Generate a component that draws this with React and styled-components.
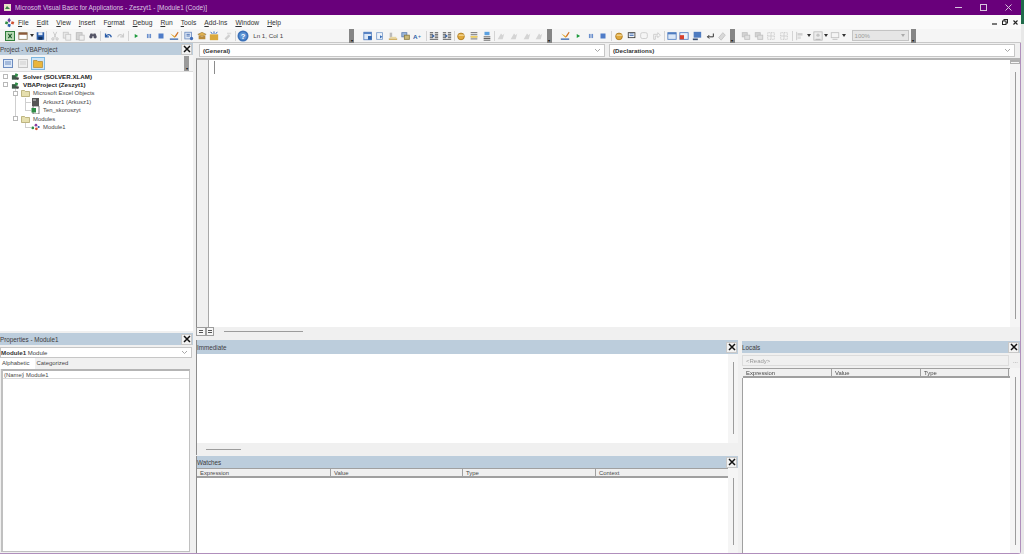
import React from 'react';
import styled, { createGlobalStyle } from 'styled-components';

const GlobalStyle = createGlobalStyle`
  html, body, #root { margin: 0; padding: 0; width: 100%; height: 100%; overflow: hidden; }
  body { font-family: "Liberation Sans", Arial, sans-serif; font-size: 6px; color: #333; background: #e8e8e8; }
  * { box-sizing: border-box; }
`;

const Screen = styled.div`
  width: 1024px;
  height: 554px;
  display: flex;
  overflow: hidden;
  filter: blur(0.3px);
`;

const Frame = styled.div`
  width: 1021px;
  flex: none;
  display: flex;
  flex-direction: column;
  background: #f0f0f0;
`;

const DesktopEdge = styled.div`
  flex: 1;
  background: linear-gradient(#1f6b4a 0 24px, #e8e8e8 24px);
`;

const TitleBar = styled.div`
  height: 15px;
  flex: none;
  display: flex;
  align-items: center;
  background: #69007b;
  color: #dcc8e2;
  font-size: 6.45px;
  padding-left: 3px;
  gap: 3px;
`;

const TitleText = styled.span`
  flex: 1;
`;

const WinControls = styled.div`
  display: flex;
`;

const WinButton = styled.div`
  width: 25px;
  height: 15px;
  display: flex;
  align-items: center;
  justify-content: center;
`;

const MenuBar = styled.div`
  height: 14px;
  flex: none;
  display: flex;
  align-items: center;
  background: #fafafa;
  padding-left: 4px;
`;

const MenuLogo = styled.div`
  width: 14px;
  height: 12px;
`;

const MenuItem = styled.span`
  font-size: 6.7px;
  color: #333;
  margin-right: ${({ $gap }) => $gap}px;
`;

const DocControls = styled.div`
  margin-left: auto;
  display: flex;
  gap: 5px;
  padding-right: 3px;
  align-items: center;
`;

const Toolbar = styled.div`
  height: 14px;
  flex: none;
  display: flex;
  align-items: center;
  background: #f5f5f5;
  padding-left: 4px;
  border-bottom: 1px solid #c8c8c8;
`;

const Slot = styled.div`
  width: ${({ $w }) => $w || 12.7}px;
  height: 12px;
  flex: none;
  display: flex;
  align-items: center;
  justify-content: center;
`;

const Sep = styled.div`
  width: 1px;
  height: 10px;
  flex: none;
  background: #d4d4d4;
  margin: 0 ${({ $m }) => $m ?? 1}px;
`;

const Gripper = styled.div`
  width: 5px;
  height: 14px;
  flex: none;
  background: #858585;
  margin: 0 ${({ $r }) => $r ?? 5}px 0 1px;
  display: flex;
  align-items: flex-end;
  justify-content: center;
  color: #111;
  font-size: 4px;
  line-height: 5px;
`;

const Position = styled.span`
  width: 99px;
  flex: none;
  font-size: 6.2px;
  color: #444;
  padding-left: 4px;
`;

const ZoomBox = styled.div`
  width: 57px;
  height: 11px;
  flex: none;
  margin: 0 1px 0 5px;
  display: flex;
  align-items: center;
  justify-content: space-between;
  padding: 0 3px 0 2px;
  border: 1px solid #c4c4c4;
  background: #e6e6e6;
  color: #9a9a9a;
  font-size: 6px;
`;

const Workspace = styled.div`
  flex: 1;
  min-height: 0;
  display: flex;
  border-right: 1px solid #b08fbc;
  border-bottom: 1px solid #b08fbc;
  border-bottom-right-radius: 3px;
`;

const LeftColumn = styled.div`
  width: 193px;
  flex: none;
  display: flex;
  flex-direction: column;
  gap: 2px;
`;

const RightColumn = styled.div`
  flex: 1;
  min-width: 0;
  margin-left: 3px;
  display: flex;
  flex-direction: column;
  gap: 2px;
`;

const DockHeader = styled.div`
  height: ${({ $h }) => $h || 12}px;
  flex: none;
  margin-top: ${({ $mt }) => $mt || 0}px;
  display: flex;
  align-items: center;
  justify-content: space-between;
  background: #bccddc;
  color: #3c3c3c;
  font-size: 6.3px;
`;

const CloseBox = styled.div`
  width: 11px;
  height: 11px;
  flex: none;
  margin-right: 1px;
  display: flex;
  align-items: center;
  justify-content: center;
  background: #f2f2f2;
  border: 1px solid #c8c8c8;
`;

const ProjectPane = styled.section`
  height: 288px;
  flex: none;
  display: flex;
  flex-direction: column;
`;

const ProjectTools = styled.div`
  height: 16px;
  flex: none;
  display: flex;
  align-items: center;
  gap: 1px;
  background: #f4f4f4;
  padding-left: 1px;
`;

const ProjectTool = styled.div`
  width: 14px;
  height: 13px;
  display: flex;
  align-items: center;
  justify-content: center;
  border: 1px solid ${({ $active }) => ($active ? '#7cb6e0' : 'transparent')};
  background: ${({ $active }) => ($active ? '#cfe6f7' : 'transparent')};
`;

const SmallGrip = styled(Gripper)`
  margin: 0 4px 0 auto;
  height: 15px;
  background: #9a9a9a;
`;

const Tree = styled.div`
  flex: 1;
  background: #fff;
  border-top: 1px solid #dcdcdc;
`;

const TreeRow = styled.div`
  position: relative;
  height: 8.5px;
  display: flex;
  align-items: center;
  padding-left: ${({ $depth }) => 3 + $depth * 10}px;
  font-size: ${({ $bold }) => ($bold ? 6.2 : 5.9)}px;
  font-weight: ${({ $bold }) => ($bold ? 700 : 400)};
  color: ${({ $bold }) => ($bold ? '#222' : '#484848')};
  white-space: nowrap;
`;

const Expander = styled.span`
  position: relative;
  width: 5px;
  height: 5px;
  flex: none;
  margin-right: 3px;
  border: 1px solid #b8b8b8;
  background: #fff;
`;

const ExpanderGap = styled.span`
  width: 8px;
  flex: none;
`;

const NodeIcon = styled.span`
  position: relative;
  width: 9px;
  height: 8px;
  flex: none;
  margin-right: 3px;
  display: flex;
  background: #fff;
`;

const TreeLine = styled.span`
  position: absolute;
  left: ${({ $x }) => $x}px;
  top: ${({ $y }) => $y}px;
  width: ${({ $w }) => $w}px;
  height: ${({ $h }) => $h}px;
  background: #cfcfcf;
`;

const PropertiesPane = styled.section`
  flex: 1;
  min-height: 0;
  display: flex;
  flex-direction: column;
`;

const Combo = styled.div`
  height: ${({ $h }) => $h || 12}px;
  flex: ${({ $grow }) => ($grow ? 1 : 'none')};
  min-width: 0;
  display: flex;
  align-items: center;
  justify-content: space-between;
  background: #fff;
  border: 1px solid #c6c6c6;
  padding: 0 3px;
  font-size: 6px;
  color: #444;
`;

const ObjectCombo = styled(Combo)`
  margin: 2px 1px 0 0;
  padding-left: 0;
`;

const BoldLabel = styled.b`
  font-weight: 700;
  font-size: 6.2px;
  color: #333;
`;

const Tabs = styled.div`
  height: 11px;
  flex: none;
  display: flex;
  align-items: center;
  font-size: 5.9px;
`;

const Tab = styled.span`
  padding: 0 ${({ $active }) => ($active ? '5px' : '2px')} 0 2px;
  height: 11px;
  line-height: 11px;
  background: ${({ $active }) => ($active ? '#fff' : 'transparent')};
  color: #444;
`;

const PropGrid = styled.div`
  flex: 1;
  margin: 0 3px 1px 1px;
  border: 1px solid #c0c0c0;
  border-top: 2px solid #b4b4b4;
  border-left: 2px solid #c0c0c0;
  background: #fff;
`;

const PropRow = styled.div`
  height: 8px;
  display: flex;
  align-items: center;
  font-size: 5.9px;
  border-bottom: 1px solid #dadada;
  color: #484848;
`;

const PropName = styled.span`
  width: 21px;
  padding-left: 1px;
  border-right: 1px solid #dadada;
`;

const PropValue = styled.span`
  padding-left: 2px;
`;

const CodePane = styled.section`
  height: 295px;
  flex: none;
  display: flex;
  flex-direction: column;
  padding-top: 1px;
`;

const ComboRow = styled.div`
  height: 14px;
  flex: none;
  display: flex;
  gap: 4px;
  padding: 0 5px 0 3px;
`;

const CodeBody = styled.div`
  flex: 1;
  min-height: 0;
  display: flex;
  border-top: 2px solid #b4b4b4;
  border-left: 1px solid #8c8c8c;
  background: #fff;
`;

const MarginBar = styled.div`
  width: 12px;
  flex: none;
  background: #f0f0f0;
  border-right: 1px solid #a8a8a8;
`;

const Editor = styled.div`
  flex: 1;
  padding: 1px 0 0 5px;
`;

const Caret = styled.div`
  width: 1px;
  height: 13px;
  background: #8c8c8c;
`;

const VScroll = styled.div`
  width: 10px;
  flex: none;
  display: flex;
  flex-direction: column;
  align-items: center;
  padding: ${({ $top }) => $top}px 0 ${({ $bottom }) => $bottom}px;
  background: #f5f5f5;
`;

const SplitBox = styled.div`
  width: 10px;
  height: 4px;
  flex: none;
  margin-bottom: 8px;
  border: 1px solid #b0b0b0;
  border-top-width: 2px;
  background: #f5f5f5;
`;

const VThumb = styled.div`
  width: 1px;
  flex: 1;
  background: #9c9c9c;
`;

const HScroll = styled.div`
  height: ${({ $h }) => $h || 11}px;
  flex: none;
  display: flex;
  align-items: center;
  padding-bottom: ${({ $pb }) => $pb || 0}px;
  background: #f0f0f0;
`;

const HThumb = styled.div`
  width: ${({ $w }) => $w}px;
  height: 1px;
  margin-left: ${({ $m }) => $m}px;
  background: #9c9c9c;
`;

const ViewButton = styled.div`
  width: ${({ $w }) => $w}px;
  height: 9px;
  flex: none;
  display: flex;
  align-items: center;
  justify-content: center;
  background: #f6f6f6;
  border: 1px solid #9c9c9c;
`;

const ViewLine = styled.div`
  width: 4px;
  height: 3px;
  border-top: 1px solid #555;
  border-bottom: 1px solid #555;
`;

const BottomArea = styled.div`
  flex: 1;
  min-height: 0;
  display: flex;
  gap: 4px;
`;

const BottomLeft = styled.div`
  width: 542px;
  flex: none;
  display: flex;
  flex-direction: column;
  gap: 1px;
`;

const ImmediatePane = styled.section`
  height: 115px;
  flex: none;
  display: flex;
  flex-direction: column;
  border-left: 1px solid #8c8c8c;
`;

const WatchesPane = styled.section`
  flex: 1;
  min-height: 0;
  display: flex;
  flex-direction: column;
  border-left: 1px solid #8c8c8c;
`;

const LocalsPane = styled.section`
  flex: 1;
  min-width: 0;
  display: flex;
  flex-direction: column;
`;

const FillRow = styled.div`
  flex: 1;
  min-height: 0;
  display: flex;
`;

const FillColumn = styled.div`
  flex: 1;
  min-width: 0;
  display: flex;
  flex-direction: column;
`;

const WhiteFill = styled.div`
  flex: 1;
  background: #fff;
`;

const LocalsBody = styled(WhiteFill)`
  border-left: 1px solid #a0a0a0;
`;

const ReadyRow = styled.div`
  height: 15px;
  flex: none;
  display: flex;
  align-items: center;
  color: #777;
  font-size: 6px;
`;

const ReadyBox = styled.div`
  width: 267px;
  height: 11px;
  margin-right: 4px;
  display: flex;
  align-items: center;
  padding-left: 3px;
  color: #999;
  border: 1px solid #dcdcdc;
  background: #f0f0f0;
`;

const ColumnHeader = styled.div`
  height: 10px;
  flex: none;
  display: flex;
  background: #f0f0f0;
  border-top: 1px solid #a0a0a0;
  border-bottom: 2px solid #a0a0a0;
  margin-left: ${({ $ml }) => $ml || 0}px;
`;

const ColumnCell = styled.span`
  width: ${({ $w }) => $w}px;
  flex: none;
  padding-left: 3px;
  font-size: 5.9px;
  line-height: 8px;
  color: #484848;
  border-right: 1px solid #a0a0a0;
`;

// toolbar icons, all drawn on a 12x12 grid
const Svg = ({ children, size = 10 }) => (
  <svg width={size} height={size} viewBox="0 0 12 12">{children}</svg>
);

const icons = {
  excel: <Svg><rect x=".5" y=".5" width="11" height="11" fill="#b6d8b2" stroke="#2f7d3c" strokeWidth="1.4" /><path d="M4 3.500l4 5M8 3.500l-4 5" stroke="#1d5a2a" strokeWidth="1.300" /></Svg>,
  form: <Svg><rect x="1" y="2" width="10" height="8" fill="#fff" stroke="#8c7a5a" /><rect x="1" y="2" width="10" height="2.500" fill="#8c5a3a" /></Svg>,
  dot: <svg width="4" height="3" viewBox="0 0 4 3"><path d="M0 0h4L2 3z" fill="#333" /></svg>,
  save: <Svg><rect x="2" y="1.500" width="9" height="9" fill="#2b5da8" /><rect x="4" y="1.500" width="5" height="3.500" fill="#dfe8f5" /><rect x="4" y="7" width="5" height="3.500" fill="#10305f" /></Svg>,
  cut: <Svg><path d="M4 1l3 7M8 1L5 8" stroke="#c4c4c4" fill="none" /><circle cx="3.500" cy="9.500" r="1.400" fill="none" stroke="#bbb" /><circle cx="8.500" cy="9.500" r="1.400" fill="none" stroke="#bbb" /></Svg>,
  copy: <Svg><rect x="1.500" y="1.500" width="6" height="7" fill="#e8e8e8" stroke="#c8c8c8" /><rect x="4.500" y="4" width="6" height="7" fill="#f0f0f0" stroke="#c8c8c8" /></Svg>,
  paste: <Svg><rect x="1.500" y="2" width="7" height="8.500" fill="#d4d4d4" stroke="#bbb" /><rect x="5" y="5" width="6" height="6" fill="#eee" stroke="#c0c0c0" /></Svg>,
  find: <Svg><path d="M1.500 7a2 2 0 1 0 4 0V3H3zM6.500 7a2 2 0 1 0 4 0L9 3H6.500z" fill="#556" /><rect x="4" y="4" width="4" height="2" fill="#556" /></Svg>,
  undo: <Svg><path d="M3 3v4h4M3.200 7C4.500 3.500 9 3.200 10 7.500" fill="none" stroke="#2b5da8" strokeWidth="1.500" /></Svg>,
  redo: <Svg><path d="M9 3v4H5M8.800 7C7.500 3.500 3 3.200 2 7.500" fill="none" stroke="#ccc" strokeWidth="1.300" /></Svg>,
  run: <Svg><path d="M4.500 3.500l4 2.500-4 2.500z" fill="#1c9a3c" /></Svg>,
  pause: <Svg><rect x="3.500" y="3.500" width="2" height="5" fill="#6a8fcc" /><rect x="6.500" y="3.500" width="2" height="5" fill="#6a8fcc" /></Svg>,
  stop: <Svg><rect x="3" y="3" width="6" height="6" fill="#4f7cc8" /></Svg>,
  design: <Svg><path d="M1 10.500h10V9H1z" fill="#2b5da8" /><path d="M1.500 3l5 5 1.500-1z" fill="#e0a020" /><path d="M7 6l3.500-5 1 .8L8 7.500z" fill="#d07020" /></Svg>,
  project: <Svg><rect x="1" y="1.500" width="8" height="8" fill="#dce7f5" stroke="#6d8cc0" /><path d="M3 4h4M3 6h4" stroke="#3a5fa8" /><circle cx="9" cy="9" r="2" fill="#3f6db8" /></Svg>,
  props: <Svg><path d="M1 4l5-2.500L11 4 6 6.500z" fill="#e0b050" stroke="#7a5c20" strokeWidth=".5" /><path d="M2 5v5h8V5L6 7z" fill="#b88a3a" /></Svg>,
  browser: <Svg><path d="M1 4h10v7H1z" fill="#d9a83c" /><path d="M2 1l2 2.500M6 .5v3M10 1L8 3.500" stroke="#3a6cb8" strokeWidth="1.200" /></Svg>,
  toolbox: <Svg><path d="M3 9l5-5 2 2-5 5z" fill="#d0d0d0" /><path d="M6 2h5v2H6z" fill="#dcdcdc" /></Svg>,
  help: <Svg size={12}><circle cx="6" cy="6" r="5.500" fill="#3a70b8" /><circle cx="6" cy="6" r="3.700" fill="#5c93d4" /><text x="6" y="8.500" fontSize="7.500" fontWeight="700" fill="#fff" textAnchor="middle" fontFamily="Liberation Sans">?</text></Svg>,
  doc: <Svg><rect x="1" y="1.500" width="9" height="9" fill="#dce8f7" stroke="#4f7cc0" /><rect x="1" y="1.500" width="9" height="2" fill="#4f7cc0" /><rect x="6" y="6" width="4.500" height="4.500" fill="#3166b0" /></Svg>,
  page: <Svg><rect x="2" y="2" width="7" height="8" fill="#eef3fa" stroke="#7a9ccc" /><path d="M6 5l3 2-3 2z" fill="#3a70b8" /></Svg>,
  list: <Svg><path d="M2 2h3v6H2z" fill="#bbb" /><path d="M1 9h10v1.500H1z" fill="#c49a3a" /><path d="M3 7h7v2H3z" fill="#e8d7a0" /></Svg>,
  indent2: <Svg><rect x="1" y="2" width="6" height="5" fill="#9cb8dc" stroke="#5f7fb0" /><rect x="4" y="5" width="6" height="5" fill="#c9b878" stroke="#8a7a40" /></Svg>,
  aa: <Svg><text x="0" y="9.500" fontSize="7.500" fontWeight="700" fill="#2b5da8" fontFamily="Liberation Sans">A</text><text x="6" y="8" fontSize="6" fill="#2b5da8" fontFamily="Liberation Sans">+</text></Svg>,
  outdent: <Svg><path d="M1 2h4M1 4h4M1 6h4M1 8h4M7 2h4M7 4h4M7 6h4M7 8h4M1 10h10" stroke="#444" /><path d="M4 4l3 2-3 2z" fill="#2b5da8" /></Svg>,
  hand: <Svg><circle cx="6" cy="6.500" r="4" fill="#e0a83c" stroke="#a87820" /><path d="M3 5h7" stroke="#fff1c4" /></Svg>,
  lines: <Svg><path d="M2 2h8M2 4.500h8M2 7h8M2 9.500h8" stroke="#555" /><rect x="2" y="6" width="8" height="2" fill="#f0d060" /></Svg>,
  lines2: <Svg><rect x="3" y="1" width="6" height="4" fill="#5aa0e0" /><path d="M2 7h8M2 9h8M2 11h8" stroke="#444" /></Svg>,
  ghost: <Svg><path d="M2 10l4-7 2 2 2-2-2 7z" fill="#d4d4d4" /></Svg>,
  speech: <Svg><rect x="1.500" y="2" width="8" height="6" fill="#fff" stroke="#333" /><path d="M3 3.500h5M3 5.500h5" stroke="#2b5da8" /></Svg>,
  bubble: <Svg><rect x="2" y="2" width="8" height="7" rx="2" fill="none" stroke="#c8c8c8" /></Svg>,
  bubble2: <Svg><path d="M2 4h5V2l3 3-3 3V6H4v4H2z" fill="none" stroke="#c8c8c8" /></Svg>,
  win: <Svg><rect x="1" y="2" width="10" height="8" fill="#dce8f7" stroke="#4f7cc0" /><rect x="1" y="2" width="10" height="2" fill="#4f7cc0" /></Svg>,
  winRed: <Svg><rect x="1" y="2" width="10" height="8" fill="#eaf0fa" stroke="#4f7cc0" /><rect x="1" y="5" width="5" height="5" fill="#d8402c" /></Svg>,
  tile: <Svg><rect x="2" y="1" width="9" height="7" fill="#4f7cc0" /><path d="M1 9h6v2H1z" fill="#3b4f70" /></Svg>,
  wrap: <Svg><path d="M10 3v4H3M5 5L3 7l2 2" fill="none" stroke="#333" strokeWidth="1.200" /></Svg>,
  pen: <Svg><path d="M2 8l5-6 3 3-5 6z" fill="#d8d8d8" stroke="#c0c0c0" /></Svg>,
  stack: <Svg><rect x="1.500" y="2" width="6" height="5" fill="#d4d4d4" stroke="#c0c0c0" /><rect x="4.500" y="5" width="6" height="5" fill="#e0e0e0" stroke="#c0c0c0" /></Svg>,
  frame: <Svg><path d="M2 2h8v8H2z" fill="none" stroke="#bbb" strokeDasharray="1 1" /><path d="M6 2v8M2 6h8" stroke="#ccc" /></Svg>,
  align: <Svg><path d="M2 1v10" stroke="#c0c0c0" /><rect x="3" y="2.500" width="6" height="3" fill="#cfcfcf" /><rect x="3" y="6.500" width="4" height="3" fill="#dcdcdc" /></Svg>,
  center: <Svg><rect x="1" y="1" width="10" height="10" fill="#ececec" stroke="#bbb" /><circle cx="6" cy="5" r="2" fill="#c4c4c4" /><path d="M3 10h6" stroke="#aaa" /></Svg>,
  size: <Svg><rect x="1.500" y="2" width="9" height="6" fill="none" stroke="#c0c0c0" /><path d="M3 10h6" stroke="#bbb" /></Svg>,
};

const Icon = ({ name, w }) => <Slot $w={w}>{icons[name]}</Slot>;

const Bars = ({ names }) => names.map((n, i) => <Icon key={n + i} name={n} />);

const Chevron = () => (
  <svg width="7" height="5" viewBox="0 0 7 5">
    <path d="M1 1l2.500 2.500L6 1" fill="none" stroke="#a8a8a8" strokeWidth="1" />
  </svg>
);

const VbaLogo = () => (
  <svg width="12" height="12" viewBox="0 0 14 12">
    <path d="M6 1l2 3-2 3-2-3z" fill="#6a3fa0" />
    <path d="M2 5l3 1-1 3-3-1z" fill="#2e8b45" />
    <path d="M9 5l3 1-1 3-3-1z" fill="#d05030" />
    <path d="M5 8l3 1-1 3-3-1z" fill="#2b5da8" />
  </svg>
);

const ModuleIcon = () => (
  <svg width="10" height="8" viewBox="0 0 10 8">
    <circle cx="2" cy="5" r="1.500" fill="#2e8b45" />
    <circle cx="5.500" cy="2" r="1.500" fill="#8a3fa0" />
    <circle cx="6" cy="6" r="1.500" fill="#d05030" />
    <circle cx="8.500" cy="4" r="1.200" fill="#2b5da8" />
  </svg>
);

const ProjectIcon = () => (
  <svg width="10" height="9" viewBox="0 0 10 9">
    <rect x="1" y="3" width="5" height="5" fill="#3c5a48" />
    <path d="M5 1l3 1-1 3-3-1z" fill="#2e8b45" />
    <path d="M6 5l3 1-1 2.500-3-1z" fill="#444" />
  </svg>
);

const FolderIcon = () => (
  <svg width="9" height="8" viewBox="0 0 9 8">
    <path d="M.5 1.500h3l1 1h4v5h-8z" fill="#e6dfae" stroke="#a79c5c" strokeWidth=".7" />
  </svg>
);

const SheetIcon = () => (
  <svg width="9" height="8" viewBox="0 0 9 8">
    <rect x="1" y="0" width="7" height="8" fill="#555" />
    <rect x="2" y="1" width="3" height="2" fill="#999" />
  </svg>
);

const BookIcon = () => (
  <svg width="9" height="8" viewBox="0 0 9 8">
    <rect x="2" y="0" width="6" height="8" fill="#fff" stroke="#444" strokeWidth=".7" />
    <rect x=".5" y="2" width="4.500" height="4.500" fill="#2e8b45" />
  </svg>
);

const CloseIcon = () => (
  <svg width="8" height="8" viewBox="0 0 8 8">
    <path d="M1 1l6 6M7 1L1 7" stroke="#111" strokeWidth="1.500" />
  </svg>
);

const Dock = ({ title, h, mt }) => (
  <DockHeader $h={h} $mt={mt}>
    <span>{title}</span>
    <CloseBox><CloseIcon /></CloseBox>
  </DockHeader>
);

const treeNodes = [
  { depth: 0, expand: true, bold: true, icon: <ProjectIcon />, label: 'Solver (SOLVER.XLAM)' },
  { depth: 0, expand: true, bold: true, icon: <ProjectIcon />, label: 'VBAProject (Zeszyt1)', lines: [[15, 6, 1, 3]] },
  { depth: 1, expand: true, icon: <FolderIcon />, label: 'Microsoft Excel Objects', lines: [[15, 0, 1, 9]] },
  { depth: 2, icon: <SheetIcon />, label: 'Arkusz1 (Arkusz1)', lines: [[15, 0, 1, 9], [25, 0, 1, 9], [25, 4, 7, 1]] },
  { depth: 2, icon: <BookIcon />, label: 'Ten_skoroszyt', lines: [[15, 0, 1, 9], [25, 0, 1, 4], [25, 4, 7, 1]] },
  { depth: 1, expand: true, icon: <FolderIcon />, label: 'Modules', lines: [[15, 0, 1, 3]] },
  { depth: 2, icon: <ModuleIcon />, label: 'Module1', lines: [[25, 0, 1, 4], [25, 4, 7, 1]] },
];

const menus = ['File', 'Edit', 'View', 'Insert', 'Format', 'Debug', 'Run', 'Tools', 'Add-Ins', 'Window', 'Help'];

const Menu = ({ label }) => {
  const hot = label === 'Format' ? 1 : 0;
  return (
    <MenuItem $gap={8}>
      {label.slice(0, hot)}
      <u>{label[hot]}</u>
      {label.slice(hot + 1)}
    </MenuItem>
  );
};

const Columns = ({ cols, ml }) => (
  <ColumnHeader $ml={ml}>
    {cols.map(([label, w]) => <ColumnCell key={label} $w={w}>{label}</ColumnCell>)}
  </ColumnHeader>
);

export default function App() {
  return (
    <Screen>
      <GlobalStyle />
      <Frame>
        <TitleBar>
          <svg width="9" height="9" viewBox="0 0 9 9"><rect x="1" y="1" width="7" height="7" fill="#e8e0c8" /><path d="M2 6l2-3 3 3z" fill="#3a7a4a" /></svg>
          <TitleText>Microsoft Visual Basic for Applications - Zeszyt1 - [Module1 (Code)]</TitleText>
          <WinControls>
            <WinButton><svg width="7" height="7" viewBox="0 0 7 7"><path d="M0 3.500h7" stroke="#d8c4de" /></svg></WinButton>
            <WinButton><svg width="7" height="7" viewBox="0 0 7 7"><rect x=".5" y=".5" width="6" height="6" fill="none" stroke="#d8c4de" /></svg></WinButton>
            <WinButton><svg width="7" height="7" viewBox="0 0 7 7"><path d="M.5.500l6 6M6.500.500l-6 6" stroke="#d8c4de" /></svg></WinButton>
          </WinControls>
        </TitleBar>

        <MenuBar>
          <MenuLogo><VbaLogo /></MenuLogo>
          {menus.map((label) => <Menu key={label} label={label} />)}
          <DocControls>
            <svg width="5" height="5" viewBox="0 0 5 5"><path d="M0 4h5" stroke="#222" strokeWidth="1.200" /></svg>
            <svg width="6" height="6" viewBox="0 0 6 6"><rect x="2" y=".5" width="3.500" height="3.500" fill="none" stroke="#222" /><rect x=".5" y="2" width="3.500" height="3.500" fill="#fafafa" stroke="#222" /></svg>
            <svg width="5" height="5" viewBox="0 0 5 5"><path d="M.5.500l4 4M4.500.500l-4 4" stroke="#222" strokeWidth="1.100" /></svg>
          </DocControls>
        </MenuBar>

        <Toolbar>
          <Icon name="excel" /><Icon name="form" /><Icon name="dot" w={5} /><Icon name="save" w={11} />
          <Sep $m={1} />
          <Bars names={['cut', 'copy', 'paste', 'find']} />
          <Sep $m={0.75} />
          <Bars names={['undo', 'redo']} />
          <Sep $m={0.75} />
          <Bars names={['run', 'pause', 'stop', 'design']} />
          <Sep $m={0.75} />
          <Bars names={['project', 'props', 'browser', 'toolbox']} />
          <Sep $m={1} />
          <Icon name="help" />
          <Position>Ln 1, Col 1</Position>
          <Gripper $r={7}>▾</Gripper>
          <Bars names={['doc', 'page', 'list', 'indent2', 'aa']} />
          <Sep />
          <Bars names={['outdent', 'outdent']} />
          <Sep $m={0.5} />
          <Bars names={['hand', 'lines', 'lines2']} />
          <Sep $m={0.5} />
          <Bars names={['ghost', 'ghost', 'ghost', 'ghost']} />
          <Gripper $r={7}>▾</Gripper>
          <Bars names={['design', 'run', 'pause', 'stop']} />
          <Sep />
          <Bars names={['hand', 'speech', 'bubble', 'bubble2']} />
          <Sep $m={0.5} />
          <Bars names={['win', 'winRed', 'tile', 'wrap', 'pen']} />
          <Gripper>▾</Gripper>
          <Bars names={['stack', 'stack', 'frame', 'frame']} />
          <Sep />
          <Icon name="align" /><Icon name="dot" w={5} />
          <Icon name="center" /><Icon name="dot" w={5} />
          <Icon name="size" /><Icon name="dot" w={5} />
          <ZoomBox><span>100%</span><svg width="4" height="3" viewBox="0 0 4 3"><path d="M0 0h4L2 3z" fill="#aaa" /></svg></ZoomBox>
          <Gripper>▾</Gripper>
        </Toolbar>

        <Workspace>
          <LeftColumn>
            <ProjectPane>
              <Dock title="Project - VBAProject" />
              <ProjectTools>
                <ProjectTool><svg width="10" height="9" viewBox="0 0 10 9"><rect x=".5" y=".5" width="9" height="8" fill="#dce8f7" stroke="#6d8cc0" /><path d="M2 3h6M2 5h6" stroke="#6d8cc0" /></svg></ProjectTool>
                <ProjectTool><svg width="10" height="9" viewBox="0 0 10 9"><rect x=".5" y=".5" width="9" height="8" fill="#eee" stroke="#c4c4c4" /><path d="M2 3h6M2 5h6" stroke="#cfcfcf" /></svg></ProjectTool>
                <ProjectTool $active><svg width="10" height="9" viewBox="0 0 10 9"><path d="M.5 1.500h3.500l1 1h4.500v6H.5z" fill="#eab63c" stroke="#a87a1c" strokeWidth=".6" /></svg></ProjectTool>
                <SmallGrip>▾</SmallGrip>
              </ProjectTools>
              <Tree>
                {treeNodes.map((n) => (
                  <TreeRow key={n.label} $depth={n.depth} $bold={n.bold}>
                    {(n.lines || []).map(([x, y, w, h]) => (
                      <TreeLine key={`${x}-${y}-${w}`} $x={x} $y={y} $w={w} $h={h} />
                    ))}
                    {n.expand ? <Expander /> : <ExpanderGap />}
                    <NodeIcon>{n.icon}</NodeIcon>
                    {n.label}
                  </TreeRow>
                ))}
              </Tree>
            </ProjectPane>

            <PropertiesPane>
              <Dock title="Properties - Module1" />
              <ObjectCombo $h={11}>
                <span><BoldLabel>Module1</BoldLabel> Module</span>
                <Chevron />
              </ObjectCombo>
              <Tabs>
                <Tab $active>Alphabetic</Tab>
                <Tab>Categorized</Tab>
              </Tabs>
              <PropGrid>
                <PropRow>
                  <PropName>(Name)</PropName>
                  <PropValue>Module1</PropValue>
                </PropRow>
              </PropGrid>
            </PropertiesPane>
          </LeftColumn>

          <RightColumn>
            <CodePane>
              <ComboRow>
                <Combo $h={13} $grow><BoldLabel>(General)</BoldLabel><Chevron /></Combo>
                <Combo $h={13} $grow><BoldLabel>(Declarations)</BoldLabel><Chevron /></Combo>
              </ComboRow>
              <CodeBody>
                <MarginBar />
                <Editor><Caret /></Editor>
                <VScroll $top={0} $bottom={8}><SplitBox /><VThumb /></VScroll>
              </CodeBody>
              <HScroll $pb={2}>
                <ViewButton $w={10}><ViewLine /></ViewButton>
                <ViewButton $w={8}><ViewLine /></ViewButton>
                <HThumb $w={79} $m={10} />
              </HScroll>
            </CodePane>

            <BottomArea>
              <BottomLeft>
                <ImmediatePane>
                  <Dock title="Immediate" h={14} />
                  <FillRow>
                    <WhiteFill />
                    <VScroll $top={8} $bottom={9}><VThumb /></VScroll>
                  </FillRow>
                  <HScroll $h={12}>
                    <HThumb $w={35} $m={9} />
                  </HScroll>
                </ImmediatePane>

                <WatchesPane>
                  <Dock title="Watches" h={12} />
                  <FillRow>
                    <FillColumn>
                      <Columns cols={[['Expression', 134], ['Value', 132], ['Type', 133], ['Context', 133]]} />
                      <WhiteFill />
                    </FillColumn>
                    <VScroll $top={10} $bottom={8}><VThumb /></VScroll>
                  </FillRow>
                </WatchesPane>
              </BottomLeft>

              <LocalsPane>
                <Dock title="Locals" h={12} mt={1} />
                <ReadyRow>
                  <ReadyBox>&lt;Ready&gt;</ReadyBox>
                  <span>...</span>
                </ReadyRow>
                <FillRow>
                  <FillColumn>
                    <Columns ml={1} cols={[['Expression', 89], ['Value', 89], ['Type', 88]]} />
                    <LocalsBody />
                  </FillColumn>
                  <VScroll $top={9} $bottom={8}><VThumb /></VScroll>
                </FillRow>
              </LocalsPane>
            </BottomArea>
          </RightColumn>
        </Workspace>
      </Frame>
      <DesktopEdge />
    </Screen>
  );
}
